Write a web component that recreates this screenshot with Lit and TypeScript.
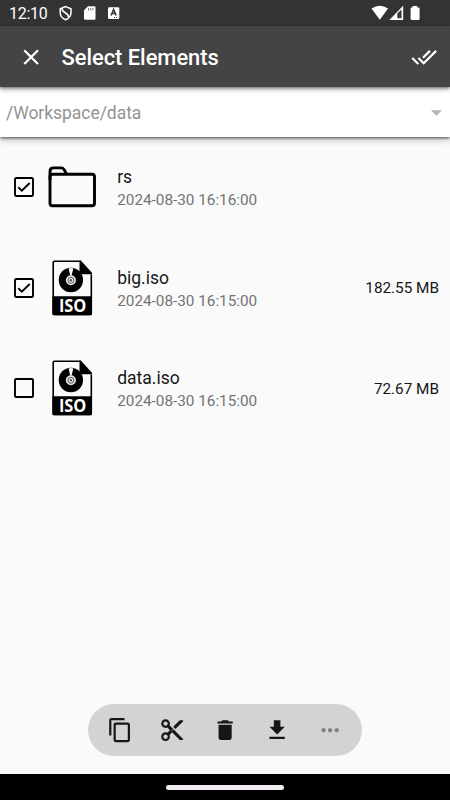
import { LitElement, html, css, svg, nothing } from "lit";
import { customElement, property } from "lit/decorators.js";

const PATHS: Record<string, string> = {
  close: "M19 6.41L17.59 5 12 10.59 6.41 5 5 6.41 10.59 12 5 17.59 6.41 19 12 13.41 17.59 19 19 17.59 13.41 12z",
  doneAll: "M18 7l-1.41-1.41-6.34 6.34 1.41 1.41L18 7zm4.24-1.41L11.66 16.17 7.48 12l-1.41 1.41L11.66 19l12-12-1.42-1.41zM.41 13.41L6 19l1.41-1.41L1.83 12 .41 13.41z",
  copy: "M16 1H4c-1.1 0-2 .9-2 2v14h2V3h12V1zm3 4H8c-1.1 0-2 .9-2 2v14c0 1.1.9 2 2 2h11c1.1 0 2-.9 2-2V7c0-1.1-.9-2-2-2zm0 16H8V7h11v14z",
  cut: "M9.64 7.64c.23-.5.36-1.05.36-1.64 0-2.21-1.79-4-4-4S2 3.79 2 6s1.79 4 4 4c.59 0 1.14-.13 1.64-.36L10 12l-2.36 2.36C7.14 14.13 6.59 14 6 14c-2.21 0-4 1.79-4 4s1.79 4 4 4 4-1.79 4-4c0-.59-.13-1.14-.36-1.64L12 14l7 7h3v-1L9.64 7.64zM6 8c-1.1 0-2-.89-2-2s.9-2 2-2 2 .89 2 2-.9 2-2 2zm0 12c-1.1 0-2-.89-2-2s.9-2 2-2 2 .89 2 2-.9 2-2 2zm6-7.5c-.28 0-.5-.22-.5-.5s.22-.5.5-.5.5.22.5.5-.22.5-.5.5zM19 3l-6 6 2 2 7-7V3z",
  trash: "M6 19c0 1.1.9 2 2 2h8c1.1 0 2-.9 2-2V7H6v12zM19 4h-3.5l-1-1h-5l-1 1H5v2h14V4z",
  download: "M19 9h-4V3H9v6H5l7 7 7-7zM5 18v2h14v-2H5z",
  more: "M6 10c-1.1 0-2 .9-2 2s.9 2 2 2 2-.9 2-2-.9-2-2-2zm12 0c-1.1 0-2 .9-2 2s.9 2 2 2 2-.9 2-2-.9-2-2-2zm-6 0c-1.1 0-2 .9-2 2s.9 2 2 2 2-.9 2-2-.9-2-2-2z",
};

@customElement("ui-icon")
class UiIcon extends LitElement {
  @property() name = "";
  static styles = css`
    :host { display: block; width: 26.25px; height: 26.25px; flex: none; }
    svg { display: block; width: 100%; height: 100%; fill: currentColor; }
  `;
  render() {
    return html`<svg viewBox="0 0 24 24">${svg`<path d=${PATHS[this.name]}></path>`}</svg>`;
  }
}

interface Entry {
  name: string;
  date: string;
  size?: string;
  checked: boolean;
}

const ENTRIES: Entry[] = [
  { name: "rs", date: "2024-08-30 16:16:00", checked: true },
  { name: "big.iso", date: "2024-08-30 16:15:00", size: "182.55 MB", checked: true },
  { name: "data.iso", date: "2024-08-30 16:15:00", size: "72.67 MB", checked: false },
];

@customElement("app-root")
class AppRoot extends LitElement {
  static styles = css`
    :host {
      display: flex; flex-direction: column; position: relative;
      width: 450px; height: 800px; overflow: hidden;
      background: #fafafa; color: #161616;
      font-family: Roboto, "Liberation Sans", sans-serif;
    }
    svg { display: block; flex: none; }
    .status {
      height: 26px; flex: none; background: #333; color: #fff;
      display: flex; align-items: center; z-index: 2;
    }
    .clock {
      width: 49px; height: 24px; padding: 2px 0 0 9px;
      font-size: 16px; line-height: 24px; letter-spacing: -0.25px; white-space: nowrap;
    }
    .right { margin-left: auto; }
    .bar {
      height: 61px; flex: none; box-sizing: border-box; padding: 1px 13px 0 17.5px;
      background: #444; color: #fff; display: flex; align-items: center; z-index: 2;
      box-shadow: 0 2px 5px rgba(0, 0, 0, 0.4), 0 1px 2px rgba(0, 0, 0, 0.3);
    }
    .title { flex: 1; margin-left: 17.7px; font-size: 21.9px; font-weight: 500; line-height: 30px; padding-top: 2px; white-space: nowrap; letter-spacing: -0.02px; }
    .path {
      height: 50px; flex: none; box-sizing: border-box; padding: 1px 8px 0 6px;
      background: #fff; color: #939393; display: flex; align-items: center; justify-content: space-between; z-index: 1;
      font-size: 17.5px; letter-spacing: -0.04px;
      box-shadow: 0 3px 8px rgba(0, 0, 0, 0.2), 0 1px 3px rgba(0, 0, 0, 0.65);
    }
    .list { flex: 1; display: flex; flex-direction: column; }
    .row { height: 100.5px; display: flex; align-items: center; padding: 0 11px 0 14px; }
    .check { width: 20px; margin-right: 12px; }
    .pic { width: 52px; }
    .text { flex: 1; margin-left: 19.2px; padding-top: 2.6px; }
    .name { font-size: 17.5px; line-height: 23px; }
    .date { font-size: 15.3px; line-height: 22px; color: #747474; white-space: nowrap; }
    .size { font-size: 15.3px; white-space: nowrap; padding-top: 1px; }
    .iso { font: bold 17px "Open Sans", "Noto Sans", sans-serif; fill: #fff; }
    .tools {
      position: absolute; left: 88px; bottom: 44px; width: 274px; height: 52px; box-sizing: border-box;
      border-radius: 26px; background: #d3d3d3; display: flex; align-items: center;
      justify-content: space-between; padding: 0 19px;
    }
    .disabled { color: #828282; }
    .nav { height: 26px; flex: none; background: #000; display: flex; align-items: center; justify-content: center; }
    .pill { width: 118px; height: 5px; border-radius: 3px; background: #f0ecf1; }
  `;

  private check(on: boolean) {
    return html`<svg class="check" width="20" height="20" viewBox="0 0 20 20" fill="none" stroke="#000" stroke-width="1.9">
      <rect x="1" y="1" width="18" height="18" rx="1.3"></rect>
      ${on ? svg`<path d="M4.3 10.3L7.8 13.6L15.7 6"></path>` : nothing}
    </svg>`;
  }

  private folder() {
    return html`<svg class="pic" width="52" height="60" viewBox="0 0 52 60" fill="none" stroke="#000" stroke-width="2.9">
      <path d="M4 23V14.5Q4 10.9 7.5 10.9H15Q17 10.9 18.2 12.7L20.5 17.2"></path>
      <rect x="4" y="17.2" width="44.5" height="31.6" rx="2.5"></rect>
    </svg>`;
  }

  private disc() {
    return html`<svg class="pic" width="52" height="60" viewBox="0 0.5 52 60">
      <path d="M34.5 3.7H8.5Q7.2 3.7 7.2 5V55.6Q7.2 57 8.5 57H44Q45.3 57 45.3 55.600V17" fill="none" stroke="#000" stroke-width="1.6"></path>
      <path d="M33.500 2.900H34.800L46 15.200V16.700H33.500Z"></path>
      <path d="M6.400 38.700H46V56.500Q46 57.800 44.700 57.800H7.700Q6.400 57.800 6.400 56.500Z"></path>
      <circle cx="24.900" cy="22.500" r="12.200"></circle>
      <path d="M22.600 10.900Q25 10.200 27.300 10.900L25.600 18H24.200Z" fill="#fafafa"></path>
      <circle cx="24.900" cy="22.800" r="5" fill="#e8e8e8"></circle>
      <circle cx="24.900" cy="22.800" r="3" fill="none" stroke="#444" stroke-width="0.900"></circle>
      <circle cx="24.900" cy="22.800" r="1.200" fill="#555"></circle>
      <text class="iso" x="12.900" y="54.200" textLength="27.500" lengthAdjust="spacingAndGlyphs">ISO</text>
    </svg>`;
  }

  render() {
    return html`
      <div class="status">
        <div class="clock">12:10</div>
        <svg width="64" height="26" viewBox="58 0 64 26">
          <path d="M65.600 6.600L71 8.700V12.500Q71 17.600 65.600 19.800Q60.200 17.600 60.200 12.500V8.700Z" fill="none" stroke="#fff" stroke-width="1.500"></path>
          <path d="M62 8.500Q61.800 11 65.600 13Q69 15 68.300 17.300" fill="none" stroke="#fff" stroke-width="1.500"></path>
          <path d="M88 6.200H94.300Q95.500 6.200 95.500 7.400V18.600Q95.500 19.800 94.300 19.800H85.200Q84 19.800 84 18.600V10.200Z" fill="#fff"></path>
          <path d="M88.500 8V10.500M90.700 8V10.500M92.900 8V10.500" stroke="#777" stroke-width="1"></path>
          <rect x="108" y="7.300" width="11.300" height="11.800" rx="1.300" fill="#fff"></rect>
          <path d="M111 15.500L113.600 9.500L116.200 15.500M112 13.500H115.200" fill="none" stroke="#333" stroke-width="1.500"></path>
          <path d="M114 17.500H118" stroke="#666" stroke-width="1" stroke-dasharray="1 1"></path>
        </svg>
        <svg class="right" width="80" height="26" viewBox="370 0 80 26">
          <path d="M371.500 8.600Q379.800 2.700 388 8.600L379.800 19.800Z" fill="#fff"></path>
          <path d="M403.200 5.800V19.900H389.300Z" fill="#fff"></path>
          <path d="M397.300 13.600L401.500 9.500V18.200H397.300Z" fill="#3a3a3a"></path>
          <path d="M412.500 6H417.200V7.400H418.600Q419.600 7.400 419.600 8.400V18.800Q419.600 19.900 418.600 19.900H411.600Q410.600 19.900 410.600 18.800V8.400Q410.600 7.400 411.600 7.400H412.500Z" fill="#fff"></path>
        </svg>
      </div>
      <div class="bar">
        <ui-icon name="close"></ui-icon>
        <div class="title">Select Elements</div>
        <ui-icon name="doneAll"></ui-icon>
      </div>
      <div class="path">
        <span>/Workspace/data</span>
        <svg width="11" height="6" viewBox="0 0 11 6"><path d="M0 0.300H11L5.500 5.800Z" fill="#b5b5b5"></path></svg>
      </div>
      <div class="list">
        ${ENTRIES.map((e) => html`
          <div class="row">
            ${this.check(e.checked)}
            ${e.size ? this.disc() : this.folder()}
            <div class="text">
              <div class="name">${e.name}</div>
              <div class="date">${e.date}</div>
            </div>
            ${e.size ? html`<div class="size">${e.size}</div>` : nothing}
          </div>`)}
      </div>
      <div class="tools">
        <ui-icon name="copy"></ui-icon>
        <ui-icon name="cut"></ui-icon>
        <ui-icon name="trash"></ui-icon>
        <ui-icon name="download"></ui-icon>
        <ui-icon name="more" class="disabled"></ui-icon>
      </div>
      <div class="nav"><div class="pill"></div></div>
    `;
  }
}
